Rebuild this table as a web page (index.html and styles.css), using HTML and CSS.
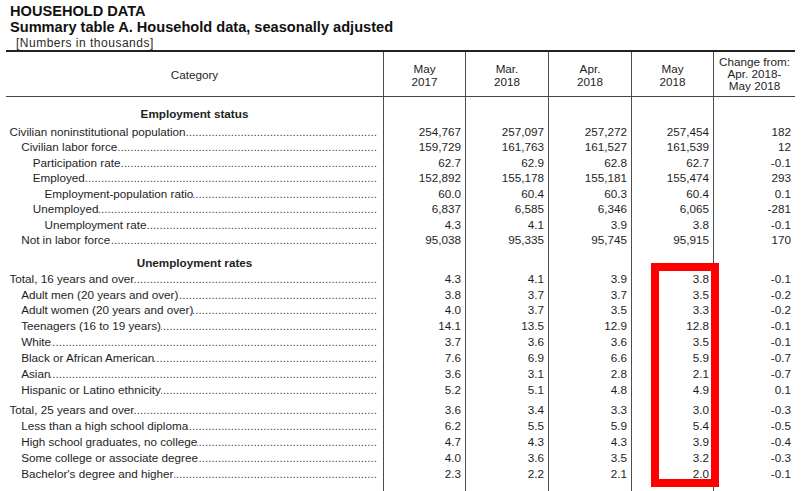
FILE: index.html
```html
<!DOCTYPE html>
<html lang="en">
<head>
<meta charset="utf-8">
<title>Household data</title>
<link rel="stylesheet" href="styles.css">
</head>
<body>
<div class="page">
  <div class="title">HOUSEHOLD DATA</div>
  <div class="title">Summary table A. Household data, seasonally adjusted</div>
  <div class="units">[Numbers in thousands]</div>

  <div class="table">
    <div class="row head">
      <div class="hc">Category</div>
      <div class="hc">May<br>2017</div>
      <div class="hc">Mar.<br>2018</div>
      <div class="hc">Apr.<br>2018</div>
      <div class="hc">May<br>2018</div>
      <div class="hc chg">Change from:<br>Apr. 2018-<br>May 2018</div>
    </div>

    <div class="row sec first"><div class="sh">Employment status</div><div></div><div></div><div></div><div></div><div></div></div>
    <div class="row r1"><div class="lab l0">Civilian noninstitutional population</div><div>254,767</div><div>257,097</div><div>257,272</div><div>257,454</div><div>182</div></div>
    <div class="row r1"><div class="lab l1">Civilian labor force</div><div>159,729</div><div>161,763</div><div>161,527</div><div>161,539</div><div>12</div></div>
    <div class="row r1"><div class="lab l2">Participation rate</div><div>62.7</div><div>62.9</div><div>62.8</div><div>62.7</div><div>-0.1</div></div>
    <div class="row r1"><div class="lab l2">Employed</div><div>152,892</div><div>155,178</div><div>155,181</div><div>155,474</div><div>293</div></div>
    <div class="row r1"><div class="lab l3">Employment-population ratio</div><div>60.0</div><div>60.4</div><div>60.3</div><div>60.4</div><div>0.1</div></div>
    <div class="row r1"><div class="lab l2">Unemployed</div><div>6,837</div><div>6,585</div><div>6,346</div><div>6,065</div><div>-281</div></div>
    <div class="row r1"><div class="lab l3">Unemployment rate</div><div>4.3</div><div>4.1</div><div>3.9</div><div>3.8</div><div>-0.1</div></div>
    <div class="row r1"><div class="lab l1">Not in labor force</div><div>95,038</div><div>95,335</div><div>95,745</div><div>95,915</div><div>170</div></div>

    <div class="row sec"><div class="sh">Unemployment rates</div><div></div><div></div><div></div><div></div><div></div></div>
    <div class="row r2"><div class="lab l0">Total, 16 years and over</div><div>4.3</div><div>4.1</div><div>3.9</div><div>3.8</div><div>-0.1</div></div>
    <div class="row r2"><div class="lab l1">Adult men (20 years and over)</div><div>3.8</div><div>3.7</div><div>3.7</div><div>3.5</div><div>-0.2</div></div>
    <div class="row r2"><div class="lab l1">Adult women (20 years and over)</div><div>4.0</div><div>3.7</div><div>3.5</div><div>3.3</div><div>-0.2</div></div>
    <div class="row r2"><div class="lab l1">Teenagers (16 to 19 years)</div><div>14.1</div><div>13.5</div><div>12.9</div><div>12.8</div><div>-0.1</div></div>
    <div class="row r2"><div class="lab l1">White</div><div>3.7</div><div>3.6</div><div>3.6</div><div>3.5</div><div>-0.1</div></div>
    <div class="row r2"><div class="lab l1">Black or African American</div><div>7.6</div><div>6.9</div><div>6.6</div><div>5.9</div><div>-0.7</div></div>
    <div class="row r2"><div class="lab l1">Asian</div><div>3.6</div><div>3.1</div><div>2.8</div><div>2.1</div><div>-0.7</div></div>
    <div class="row r2"><div class="lab l1">Hispanic or Latino ethnicity</div><div>5.2</div><div>5.1</div><div>4.8</div><div>4.9</div><div>0.1</div></div>
    <div class="row r2 gap"><div class="lab l0">Total, 25 years and over</div><div>3.6</div><div>3.4</div><div>3.3</div><div>3.0</div><div>-0.3</div></div>
    <div class="row r2"><div class="lab l1">Less than a high school diploma</div><div>6.2</div><div>5.5</div><div>5.9</div><div>5.4</div><div>-0.5</div></div>
    <div class="row r2"><div class="lab l1">High school graduates, no college</div><div>4.7</div><div>4.3</div><div>4.3</div><div>3.9</div><div>-0.4</div></div>
    <div class="row r2"><div class="lab l1">Some college or associate degree</div><div>4.0</div><div>3.6</div><div>3.5</div><div>3.2</div><div>-0.3</div></div>
    <div class="row r2"><div class="lab l1">Bachelor's degree and higher</div><div>2.3</div><div>2.2</div><div>2.1</div><div>2.0</div><div>-0.1</div></div>

    <div class="row sec last"><div class="sh">Reasons for unemployment</div><div></div><div></div><div></div><div></div><div></div></div>
  </div>
</div>
<div class="highlight"></div>
</body>
</html>
```

FILE: styles.css
```css
html, body {
  margin: 0;
  padding: 0;
  background: #ffffff;
}

body {
  position: relative;
  font-family: "Liberation Sans", Arial, Helvetica, sans-serif;
  color: #1e1e1e;
}

.page {
  padding: 4px 0 0 6px;
}

.title {
  font-weight: bold;
  font-size: 14.6px;
  line-height: 15.6px;
  padding-left: 4px;
  color: #111;
}

.units {
  font-size: 12px;
  line-height: 13px;
  letter-spacing: 0.5px;
  padding-left: 10px;
  margin-top: 2px;
  color: #2a2a2a;
}

.table {
  width: 789px;
  border-top: 2px solid #222;
  font-size: 11.7px;
}

.row {
  display: grid;
  grid-template-columns: 377px 82px 83px 83px 82px 82px;
}

.row > div + div {
  border-left: 1px solid #4d4d4d;
  text-align: right;
  padding-right: 4px;
}

.row.head {
  height: 44px;
  border-bottom: 1px solid #444;
}

.row.head > .hc {
  display: flex;
  align-items: center;
  justify-content: center;
  text-align: center;
  line-height: 13.5px;
  padding: 2px 0 0 0;
}

.row.head > .hc.chg {
  line-height: 11.7px;
  padding: 0 0 1px 0;
}

.r1 {
  line-height: 15.5px;
}

.r2 {
  line-height: 15.85px;
}

.sec {
  line-height: 15.5px;
}

.sec > div {
  padding-top: 7.5px;
}

.sec.first > div {
  padding-top: 9px;
  padding-bottom: 2px;
}

.sec.last > div {
  padding-top: 5px;
}

.gap > div {
  padding-top: 5px;
}

.sh {
  font-weight: bold;
  text-align: center;
}

.lab {
  display: flex;
  white-space: nowrap;
  padding-right: 6px;
}

.lab::after {
  content: "........................................................................................................................................................";
  flex: 1 1 0;
  min-width: 0;
  overflow: hidden;
  direction: rtl;
  padding-left: 1px;
  color: #444;
}

.l0 { padding-left: 3.5px; }
.l1 { padding-left: 15.2px; }
.l2 { padding-left: 26.8px; }
.l3 { padding-left: 38.5px; }

.highlight {
  position: absolute;
  left: 651px;
  top: 263px;
  width: 68px;
  height: 224px;
  box-sizing: border-box;
  border: 8px solid #ff0000;
}
```
